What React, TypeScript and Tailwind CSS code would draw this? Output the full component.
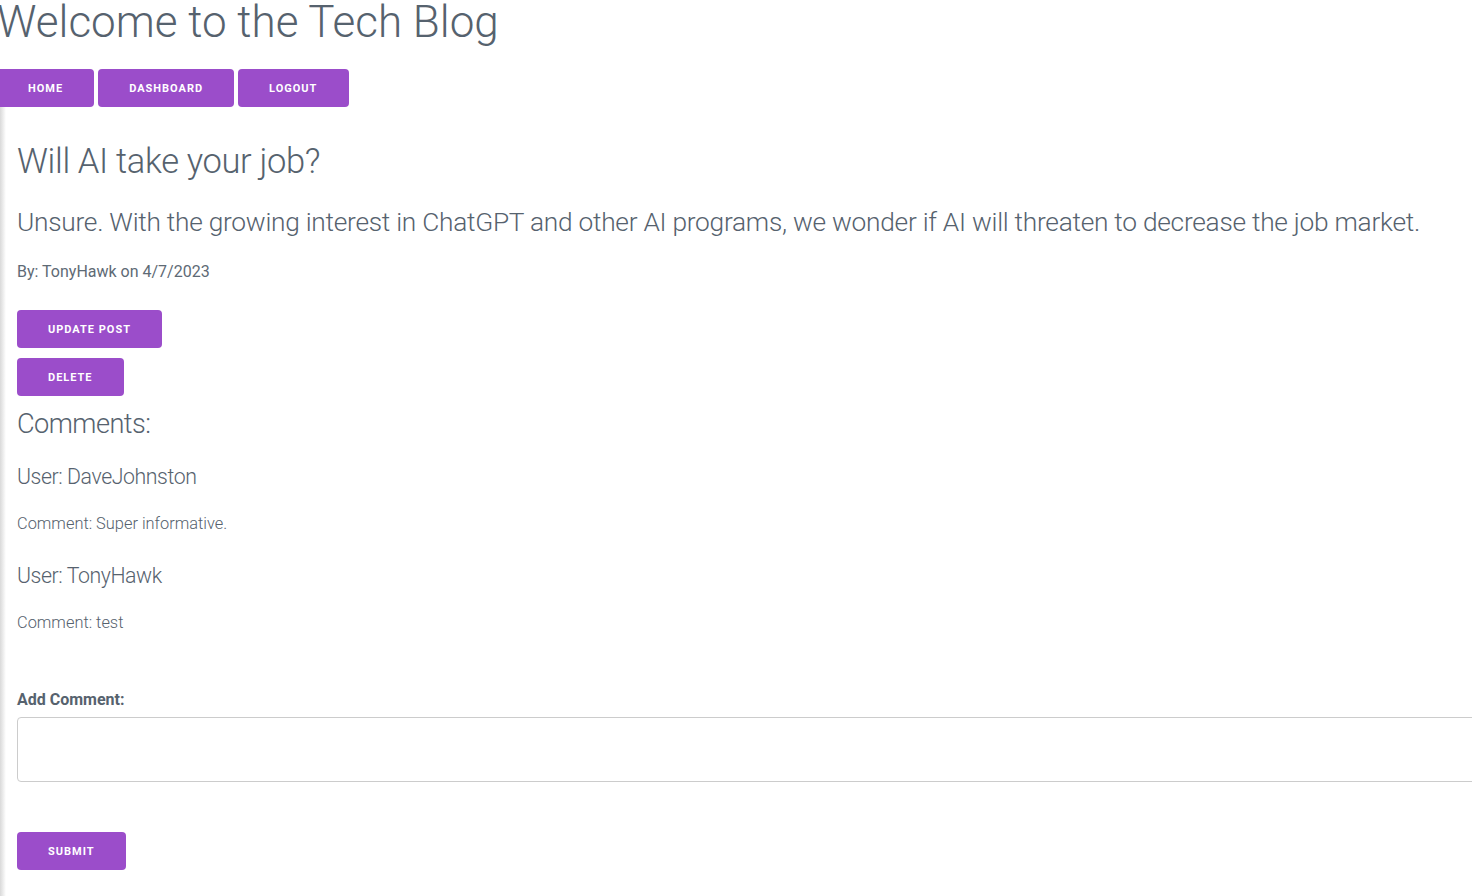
import React from 'react';

const btn =
  'h-[38px] rounded-[4px] bg-[#9b4dca] text-white text-[11px] font-bold uppercase tracking-[0.09em] px-[31px] leading-[39px]';

const comments = [
  { user: 'DaveJohnston', text: 'Super informative.' },
  { user: 'TonyHawk', text: 'test' },
];

const App = () => {
  return (
    <div className="min-h-[896px] overflow-hidden bg-white text-[#56626e] font-['Roboto',sans-serif]">
      <h1 className="-mt-[2px] -ml-[3px] text-[44px] leading-[48px] font-light whitespace-nowrap">
        Welcome to the Tech Blog
      </h1>

      <nav className="mt-[23px] -ml-[3px] flex gap-[4px]">
        <button className={btn}>Home</button>
        <button className={btn}>Dashboard</button>
        <button className={`${btn} pr-[32px]`}>Logout</button>
      </nav>

      <div className="flex">
        <div className="w-[6px] shrink-0 bg-gradient-to-r from-[#d9d9d9] to-white" />
        <main className="pl-[11px] pb-[26px]">
          <h2 className="mt-[34px] text-[34.5px] leading-[40px] font-light tracking-[-0.01em]">Will AI take your job?</h2>
          <p className="mt-[24px] text-[26.3px] leading-[34px] font-light whitespace-nowrap tracking-[-0.01em]">
            Unsure. With the growing interest in ChatGPT and other AI programs, we wonder if AI will threaten to decrease the job market.
          </p>
          <p className="mt-[23px] text-[16px] leading-[20px] text-[#5e6a75]">By: TonyHawk on 4/7/2023</p>

          <div className="mt-[28px] flex flex-col items-start gap-[10px]">
            <button className={btn}>Update Post</button>
            <button className={btn}>Delete</button>
          </div>

          <h3 className="mt-[12px] text-[27.2px] leading-[32px] font-light tracking-[-0.02em]">Comments:</h3>

          {comments.map((c, i) => (
            <div key={i} className={i === 0 ? 'mt-[23px]' : 'mt-[28px]'}>
              <h4 className="text-[21.3px] leading-[28px] font-light tracking-[-0.02em]">User: {c.user}</h4>
              <p className="mt-[23px] text-[16.4px] leading-[20px] font-light">Comment: {c.text}</p>
            </div>
          ))}

          <form className="mt-[57px]">
            <label className="block text-[16px] leading-[20px] font-bold">Add Comment:</label>
            <textarea className="mt-[7px] block w-[1480px] h-[65px] rounded-[4px] border border-[#cccccc] resize-none" />
            <button type="button" className={`${btn} mt-[50px]`}>Submit</button>
          </form>
        </main>
      </div>
    </div>
  );
};

export default App;
